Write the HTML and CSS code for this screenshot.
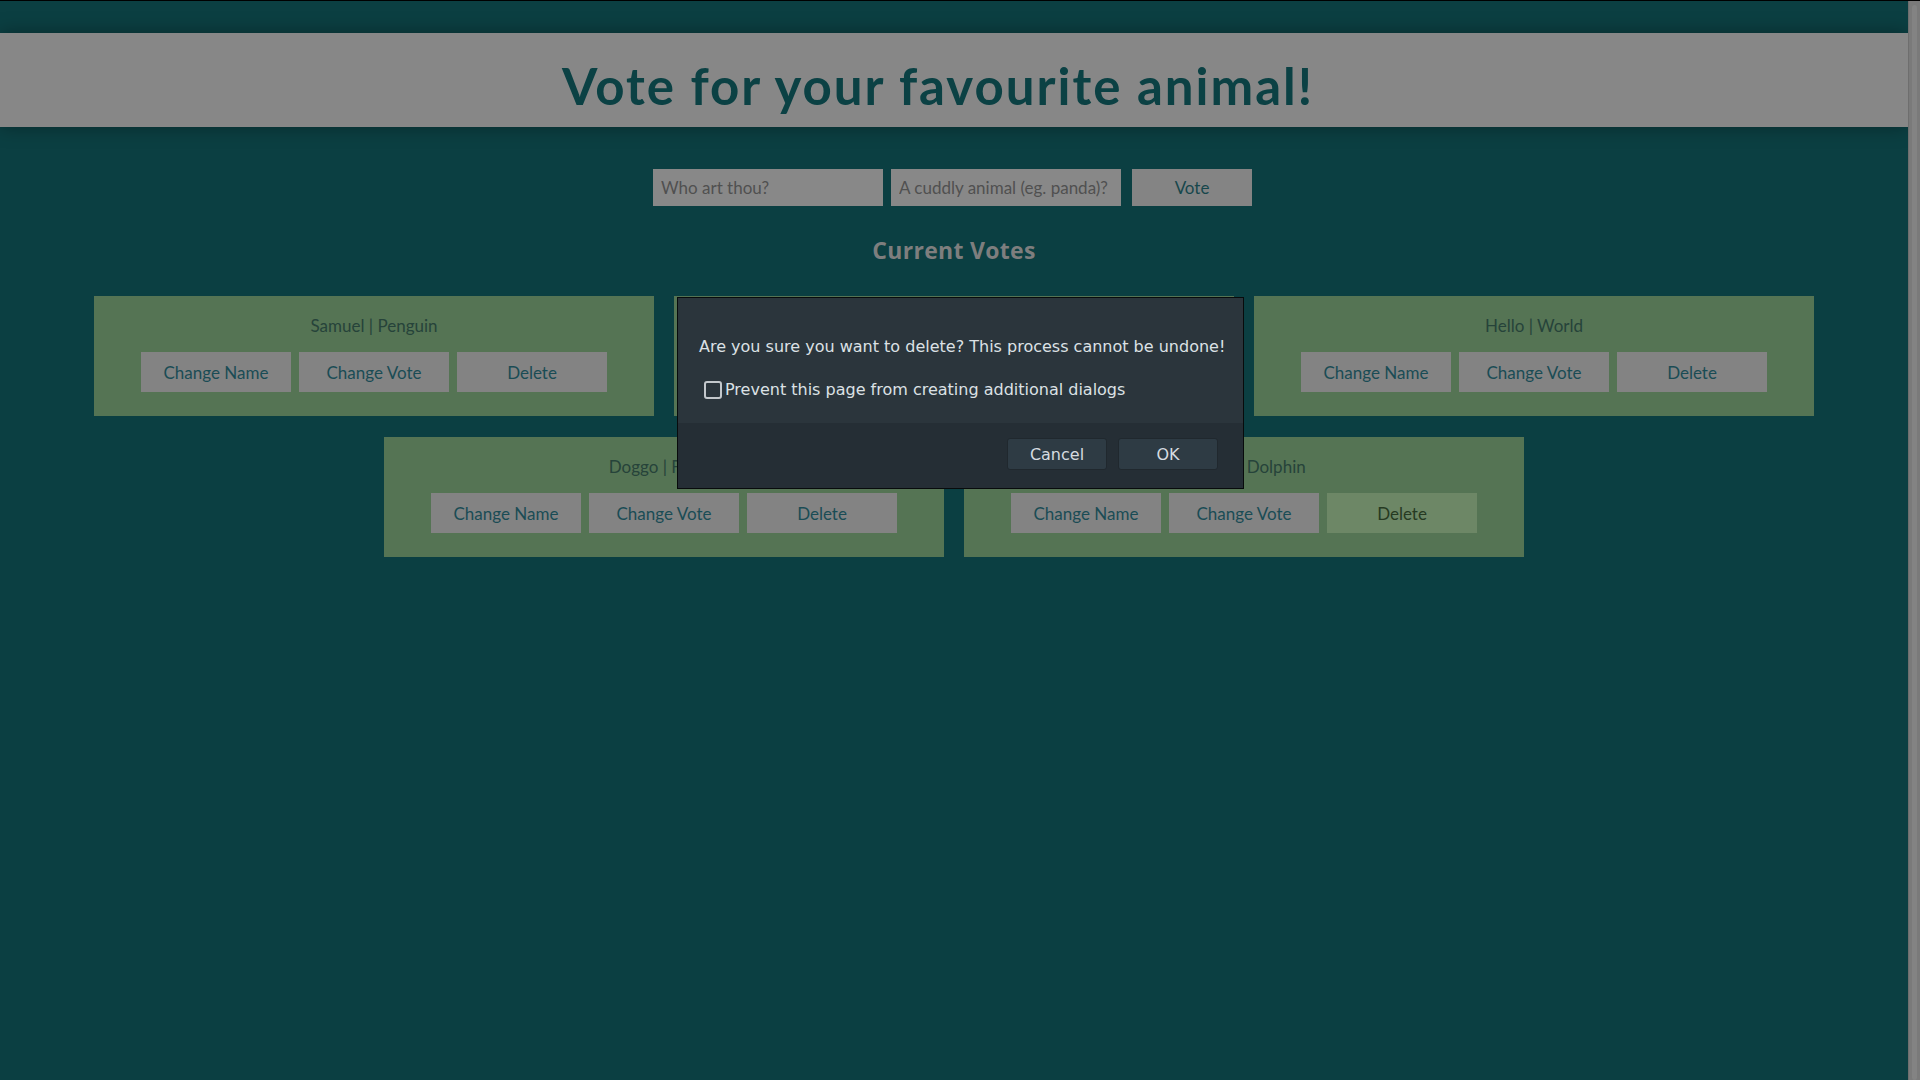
FILE: index.html
```html
<!DOCTYPE html>
<html lang="en">
<head>
<meta charset="utf-8">
<title>Vote for your favourite animal!</title>
<link rel="stylesheet" href="styles.css">
</head>
<body>
<div class="page">
  <div class="main">
    <header class="header">
      <h1 class="title">Vote for your favourite animal!</h1>
    </header>
    <form class="vote-form">
      <input class="field" type="text" placeholder="Who art thou?">
      <input class="field" type="text" placeholder="A cuddly animal (eg. panda)?">
      <button class="vote-btn" type="button">Vote</button>
    </form>
    <h2 class="subtitle">Current Votes</h2>
    <div class="cards">
      <div class="card">
        <p class="card-text">Samuel | Penguin</p>
        <div class="card-actions">
          <button class="btn" type="button">Change Name</button>
          <button class="btn" type="button">Change Vote</button>
          <button class="btn" type="button">Delete</button>
        </div>
      </div>
      <div class="card">
        <p class="card-text">Alice | Panda</p>
        <div class="card-actions">
          <button class="btn" type="button">Change Name</button>
          <button class="btn" type="button">Change Vote</button>
          <button class="btn" type="button">Delete</button>
        </div>
      </div>
      <div class="card">
        <p class="card-text">Hello | World</p>
        <div class="card-actions">
          <button class="btn" type="button">Change Name</button>
          <button class="btn" type="button">Change Vote</button>
          <button class="btn" type="button">Delete</button>
        </div>
      </div>
      <div class="card">
        <p class="card-text">Doggo | Falcon</p>
        <div class="card-actions">
          <button class="btn" type="button">Change Name</button>
          <button class="btn" type="button">Change Vote</button>
          <button class="btn" type="button">Delete</button>
        </div>
      </div>
      <div class="card">
        <p class="card-text">Flipper | Dolphin</p>
        <div class="card-actions">
          <button class="btn" type="button">Change Name</button>
          <button class="btn" type="button">Change Vote</button>
          <button class="btn btn-hover" type="button">Delete</button>
        </div>
      </div>
    </div>
  </div>
  <div class="scrollbar"><div class="thumb"></div></div>
</div>

<div class="dialog">
  <div class="dialog-body">
    <p class="dialog-msg">Are you sure you want to delete? This process cannot be undone!</p>
    <label class="dialog-check"><span class="box"></span>Prevent this page from creating additional dialogs</label>
  </div>
  <div class="dialog-foot">
    <button class="dlg-btn" type="button">Cancel</button>
    <button class="dlg-btn" type="button">OK</button>
  </div>
</div>
</body>
</html>
```

FILE: styles.css
```css
html, body {
  margin: 0;
  padding: 0;
  height: 100%;
  overflow: hidden;
}
body {
  background: #0b3f42;
  font-family: Lato, "Open Sans", sans-serif;
}
.page {
  display: flex;
  height: 100%;
  border-top: 1px solid #000;
  box-sizing: border-box;
}
.main {
  flex: 1;
  padding-top: 32px;
}
.header {
  height: 94px;
  background: #878787;
  display: flex;
  align-items: center;
  justify-content: center;
  box-shadow: 0 0 18px rgba(0, 0, 0, 0.35);
  padding-right: 32px;
}
.title {
  margin: 0;
  font-size: 51px;
  font-weight: 700;
  letter-spacing: 2px;
  color: #0b4144;
  line-height: 1;
  padding-top: 10px;
}
.vote-form {
  display: flex;
  justify-content: center;
  margin: 42px 0 0;
  padding-right: 3px;
  height: 37px;
}
.field {
  width: 230px;
  height: 37px;
  box-sizing: border-box;
  border: 0;
  background: #888888;
  padding: 0 8px;
  font-family: Lato, sans-serif;
  font-size: 17px;
  color: #4d4d4d;
  margin-right: 8px;
  outline: none;
}
.field::placeholder {
  color: #505050;
}
.field + .field {
  margin-right: 11px;
}
.vote-btn {
  width: 120px;
  height: 37px;
  border: 0;
  background: #848484;
  font-family: Lato, sans-serif;
  font-size: 17px;
  color: #17474c;
}
.subtitle {
  margin: 32px 0 0;
  text-align: center;
  font-family: "Open Sans", Lato, sans-serif;
  font-size: 23px;
  font-weight: 700;
  letter-spacing: 0.3px;
  color: #7e7e7e;
  line-height: 24px;
}
.cards {
  display: flex;
  flex-wrap: wrap;
  justify-content: center;
  gap: 21px 20px;
  margin-top: 34px;
}
.card {
  width: 560px;
  height: 120px;
  box-sizing: border-box;
  background: #557454;
  padding-top: 18px;
  text-align: center;
}
.card-text {
  margin: 0;
  font-size: 17px;
  line-height: 24px;
  color: #26433a;
}
.card-actions {
  display: flex;
  justify-content: center;
  gap: 8px;
  margin-top: 14px;
}
.btn {
  width: 150px;
  height: 40px;
  border: 0;
  background: #838383;
  font-family: Lato, sans-serif;
  font-size: 17px;
  color: #1a4c55;
  padding: 0;
}
.btn-hover {
  background: #6d8766;
  color: #263a22;
}
.scrollbar {
  width: 12px;
  background: #7a7a7a;
  padding: 4px 3px 0 3px;
  box-sizing: border-box;
  border-left: 1px solid #6e6e6e;
}
.thumb {
  height: 100%;
  background: #838383;
  border-radius: 3px;
}
.dialog {
  position: fixed;
  left: 677px;
  top: 297px;
  width: 567px;
  box-sizing: border-box;
  border: 1px solid #080b0c;
  background: #2b353c;
  font-family: "DejaVu Sans", sans-serif;
  color: #dce1e5;
  font-size: 16px;
}
.dialog-body {
  padding: 40px 10px 24px 21px;
}
.dialog-msg {
  margin: 0;
  line-height: 18px;
  white-space: nowrap;
}
.dialog-check {
  display: flex;
  align-items: center;
  margin: 25px 0 0 5px;
  line-height: 18px;
  white-space: nowrap;
}
.box {
  width: 18px;
  height: 18px;
  box-sizing: border-box;
  border: 2px solid #c3c8cc;
  border-radius: 3px;
  margin-right: 3px;
  flex: none;
}
.dialog-foot {
  background: #252e35;
  height: 65px;
  box-sizing: border-box;
  padding: 15px 25px 0 0;
  display: flex;
  justify-content: flex-end;
  gap: 11px;
}
.dlg-btn {
  width: 100px;
  height: 32px;
  border: 1px solid #20282e;
  border-radius: 3px;
  background: #2e3b44;
  color: #d6dce0;
  font-family: "DejaVu Sans", sans-serif;
  font-size: 16px;
}
```
